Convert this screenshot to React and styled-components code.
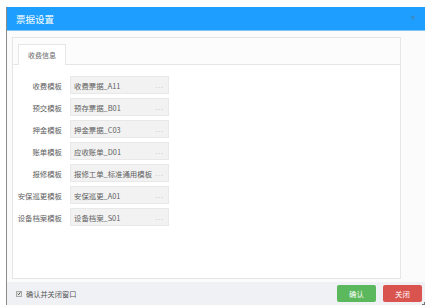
import React from "react";
import styled, { createGlobalStyle } from "styled-components";

const Global = createGlobalStyle`
  html, body { margin: 0; padding: 0; background: #ffffff; }
  body { font-family: "Noto Sans CJK SC", "Noto Sans", sans-serif; }
  * { box-sizing: border-box; }
`;

const Page = styled.div`
  width: 435px;
  height: 308px;
  padding: 7px 10px 3px 6px;
`;

const Dialog = styled.div`
  position: relative;
  width: 419px;
  height: 298px;
  display: flex;
  flex-direction: column;
  background: #fbfbfb;
  border-left: 1px solid #8c8c8c;
`;

const Header = styled.div`
  height: 24px;
  flex: none;
  display: flex;
  align-items: center;
  justify-content: space-between;
  padding: 0 9px 0 9px;
  background: #1e9fff;
  border-bottom: 1px solid #7fc4f5;
`;

const Title = styled.span`
  color: #ffffff;
  font-size: 9.5px;
`;

const Close = styled.span`
  color: #4a7fae;
  font-size: 7px;
  line-height: 1;
  font-family: "DejaVu Sans", sans-serif;
`;

const Body = styled.div`
  flex: 1;
  padding: 6px 24px 3px 5px;
  display: flex;
`;

const Panel = styled.div`
  flex: 1;
  border: 1px solid #e6e6e6;
  background: #ffffff;
  display: flex;
  flex-direction: column;
`;

const TabBar = styled.div`
  height: 27px;
  flex: none;
  background: #fcfcfc;
  border-bottom: 1px solid #e6e6e6;
  display: flex;
  align-items: flex-end;
  padding-left: 5px;
`;

const Tab = styled.div`
  width: 48px;
  height: 21px;
  margin-bottom: -1px;
  background: #ffffff;
  border: 1px solid #e6e6e6;
  border-bottom: none;
  display: flex;
  align-items: center;
  justify-content: center;
  font-size: 7px;
  color: #666;
`;

const Form = styled.div`
  padding-top: 11px;
  display: flex;
  flex-direction: column;
  gap: 4px;
`;

const Row = styled.div`
  display: flex;
  align-items: center;
  gap: 8px;
  height: 18px;
`;

const Label = styled.span`
  width: 49px;
  text-align: right;
  font-size: 7.4px;
  color: #606060;
  white-space: nowrap;
`;

const Field = styled.div`
  width: 99px;
  height: 18px;
  background: #f2f2f2;
  border: 1px solid #e8e8e8;
  display: flex;
  align-items: center;
  justify-content: space-between;
  padding: 0 4px 0 3px;
  font-size: 7.4px;
  color: #606060;
  white-space: nowrap;
`;

const Dots = styled.span`
  color: #c4c4c4;
  font-size: 7px;
  letter-spacing: 1px;
`;

const Footer = styled.div`
  height: 23px;
  flex: none;
  background: #eff1f4;
  display: flex;
  align-items: center;
  justify-content: space-between;
  padding: 0 3px 0 9px;
`;

const CheckLabel = styled.label`
  display: flex;
  align-items: center;
  gap: 4px;
  font-size: 7.2px;
  color: #555;
`;

const Box = styled.span`
  width: 6px;
  height: 6px;
  border: 1px solid #aaa;
  background: #e8e8e8;
  display: flex;
  align-items: center;
  justify-content: center;
`;

const Buttons = styled.div`
  display: flex;
  gap: 7px;
`;

const Button = styled.button`
  width: 39px;
  height: 17px;
  border: none;
  border-radius: 2px;
  color: #fff;
  font-family: inherit;
  font-size: 7.4px;
  padding: 0;
  background: ${(p) => (p.$tone === "green" ? "#5cb85c" : "#d9534f")};
`;

const Grip = styled.span`
  position: absolute;
  right: 0;
  bottom: 0;
  width: 3px;
  height: 3px;
  border-right: 1px solid #777;
  border-bottom: 1px solid #777;
`;

const rows = [
  ["收费模板", "收费票据_A11"],
  ["预交模板", "预存票据_B01"],
  ["押金模板", "押金票据_C03"],
  ["账单模板", "应收账单_D01"],
  ["报修模板", "报修工单_标准通用模板"],
  ["安保巡更模板", "安保巡更_A01"],
  ["设备档案模板", "设备档案_S01"],
];

export default function App() {
  return (
    <>
      <Global />
      <Page>
        <Dialog>
          <Header>
            <Title>票据设置</Title>
            <Close>✕</Close>
          </Header>
          <Body>
            <Panel>
              <TabBar>
                <Tab>收费信息</Tab>
              </TabBar>
              <Form>
                {rows.map(([l, v]) => (
                  <Row key={l}>
                    <Label>{l}</Label>
                    <Field>
                      <span>{v}</span>
                      <Dots>...</Dots>
                    </Field>
                  </Row>
                ))}
              </Form>
            </Panel>
          </Body>
          <Footer>
            <CheckLabel>
              <Box>
                <svg width="5" height="5" viewBox="0 0 10 10">
                  <path d="M1.5 5.5 L4 8 L8.5 2" stroke="#333" strokeWidth="2" fill="none" />
                </svg>
              </Box>
              确认并关闭窗口
            </CheckLabel>
            <Buttons>
              <Button $tone="green">确认</Button>
              <Button $tone="red">关闭</Button>
            </Buttons>
          </Footer>
          <Grip />
        </Dialog>
      </Page>
    </>
  );
}
